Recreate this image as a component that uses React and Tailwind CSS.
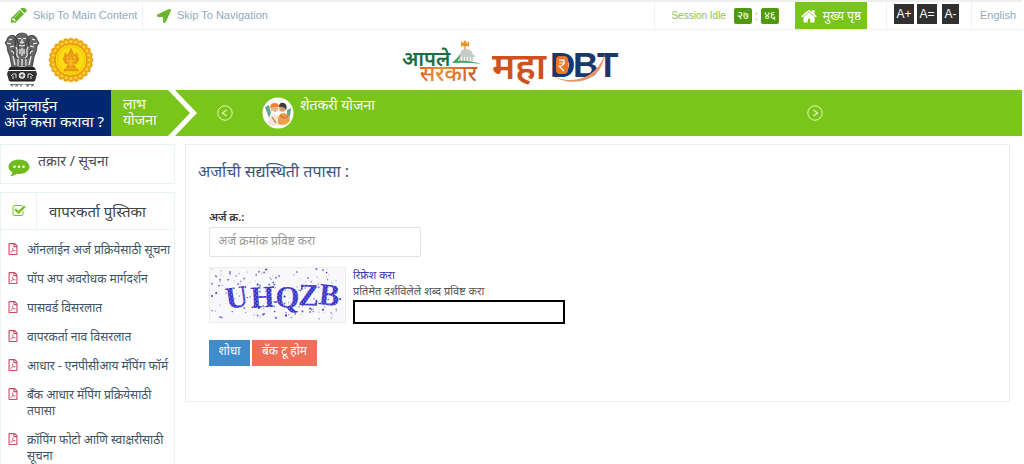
import React from "react";
import { FaLocationArrow, FaRegFilePdf } from "react-icons/fa";

const guides = [
  "ऑनलाईन अर्ज प्रक्रियेसाठी सूचना",
  "पॉप अप अवरोधक मार्गदर्शन",
  "पासवर्ड विसरलात",
  "वापरकर्ता नाव विसरलात",
  "आधार - एनपीसीआय मॅपिंग फॉर्म",
  "बँक आधार मॅपिंग प्रक्रियेसाठी तपासा",
  "क्रॉपिंग फोटो आणि स्वाक्षरीसाठी सूचना",
];

function Pencil() {
  return (
    <svg viewBox="128 256 1536 1536" className="size-4 text-[#69b62c]" fill="currentColor" aria-hidden="true">
      <path d="M491 1536l91-91-235-235-91 91v107h128v128h107zm523-928q0-22-22-22-10 0-17 7l-542 542q-7 7-7 17 0 22 22 22 10 0 17-7l542-542q7-7 7-17zm-54-192l416 416-832 832h-416v-416zm683 96q0 53-37 90l-166 166-416-416 166-165q36-38 90-38 53 0 91 38l235 234q37 39 37 91z" />
    </svg>
  );
}

function Home() {
  return (
    <svg viewBox="0 170 1664 1400" className="h-3.5 w-4" fill="currentColor" aria-hidden="true">
      <path d="M1408 992v480q0 26-19 45t-45 19H960v-384H704v384H320q-26 0-45-19t-19-45V992q0-1 .5-3t.5-3l575-474 575 474q1 2 1 6zm223-69l-62 74q-8 9-21 11h-3q-13 0-21-7L832 424l-692 577q-12 8-24 7-13-2-21-11l-62-74q-8-10-7-23.5t11-21.5l719-599q32-26 76-26t76 26l244 204V288q0-14 9-23t23-9h192q14 0 23 9t9 23v408l219 182q10 8 11 21.5t-7 23.5z" />
    </svg>
  );
}

function CheckBoxIcon() {
  return (
    <svg viewBox="0 0 1792 1792" className="size-3.5 text-[#7ac519]" fill="currentColor" aria-hidden="true">
      <path d="M1472 930v318q0 119-84.5 203.5t-203.5 84.5h-832q-119 0-203.5-84.5t-84.5-203.5v-832q0-119 84.5-203.5t203.5-84.5h832q63 0 117 25 15 7 18 23 3 17-9 29l-49 49q-10 10-23 10-3 0-9-2-23-6-45-6h-832q-66 0-113 47t-47 113v832q0 66 47 113t113 47h832q66 0 113-47t47-113v-254q0-13 9-22l64-64q10-10 23-10 6 0 12 3 20 8 20 29zm231-489l-814 814q-24 24-57 24t-57-24l-430-430q-24-24-24-57t24-57l110-110q24-24 57-24t57 24l263 263 647-647q24-24 57-24t57 24l110 110q24 24 24 57t-24 57z" />
    </svg>
  );
}

function Comment() {
  return (
    <svg viewBox="0 0 22 18" className="h-[18px] w-[22px] shrink-0" aria-hidden="true">
      <path d="M11 .5C5.200.500.500 3.700.500 7.700c0 2.300 1.500 4.300 3.900 5.600-.3 1.700-1.100 2.900-2.200 4 2.600-.3 4.700-1.200 6.200-2.600.8.200 1.700.2 2.600.2 5.800 0 10.500-3.200 10.500-7.200S16.800.5 11 .5z" fill="#6fbb1c" />
      <g fill="#fff">
        <circle cx="6.500" cy="7.800" r="1.300" />
        <circle cx="11" cy="7.800" r="1.300" />
        <circle cx="15.500" cy="7.800" r="1.300" />
      </g>
    </svg>
  );
}

function LionEmblem() {
  return (
    <svg viewBox="0 0 36 56" className="h-14 w-9" role="img" aria-label="भारत सरकार">
      <g fill="#666" stroke="#222" strokeWidth=".7">
        <path d="M13 3c2-2.500 8-2.500 10 0l3 5-1 9 1 17H10l1-17-1-9z" />
        <path d="M11 4C7 2 3 5 3 8L1 11l2 3c0 5 2 8 3 11l2 11h6l-1-15 2-8z" />
        <path d="M25 4c4-2 8 1 8 4l2 3-2 3c0 5-2 8-3 11l-2 11h-6l1-15-2-8z" />
      </g>
      <g fill="none" stroke="#f4f4f4" strokeWidth="1.200">
        <path d="M14 6.500h3M19 6.500h3M16 10l2 1 2-1M15 13q3 2 6 0M18 7v3" />
        <path d="M12 15q2 3 1 6t2 5M24 15q-2 3-1 6t-2 5M16 17v5M20 17v5M18 16v8" />
        <path d="M5 8l3-1M3 11l4 1M6 15l4-1M7 19q3 0 3 3M31 8l-3-1M33 11l-4 1M30 15l-4-1M29 19q-3 0-3 3" />
        <path d="M9 24l2 9M14 27v7M18 27v7M22 27v7M27 24l-2 9" />
      </g>
      <g fill="none" stroke="#222" strokeWidth=".8">
        <path d="M10 7q3 3 1 7M26 7q-3 3-1 7M9 17q3 4 2 9M27 17q-3 4-2 9" />
      </g>
      <path d="M6 35h24l2 3H4z" fill="#222" />
      <path d="M4 39h28l1 3-2 7H5l-2-7z" fill="#333" />
      <circle cx="18" cy="43.500" r="4" fill="#fff" stroke="#111" />
      <circle cx="18" cy="43.500" r="1" />
      <path d="M18 40v7M14.500 43.500h7M15.500 41l5 5M20.500 41l-5 5" stroke="#444" strokeWidth=".5" />
      <path d="M7 44l2-2h3v4M9 44v3M29 44l-2-2h-3v4M27 44v3" stroke="#ddd" fill="none" />
      <path d="M6 49h24" stroke="#111" />
      <path d="M6 52.500h13M21 52.500h9M7 54h2M11 54h3M16 54h2M22 54h3M27 54h2M8 52v2M13 52v2M24 52v2M29 52v2" stroke="#555" strokeWidth=".8" />
    </svg>
  );
}

function StateSeal() {
  const petals = Array.from({ length: 24 }, (_, i) => (i * Math.PI) / 12);
  return (
    <svg viewBox="-23 -23 46 46" className="size-[46px]" role="img" aria-label="महाराष्ट्र शासन">
      {petals.map((a) => (
        <circle key={a} cx={19.6 * Math.cos(a)} cy={19.6 * Math.sin(a)} r="2.700" fill="#e9a515" />
      ))}
      <circle r="20.500" fill="#f0aa13" />
      {petals.map((a) => (
        <circle key={a} cx={18.4 * Math.cos(a)} cy={18.4 * Math.sin(a)} r="1.300" fill="#ffd83a" />
      ))}
      <circle r="16" fill="#fbd90f" stroke="#dd8f10" strokeWidth="1" />
      <circle r="13.500" fill="#fddb12" stroke="#f1b90f" strokeWidth=".8" />
      <g fill="#ec9a18" stroke="#da8015" strokeWidth=".5">
        <path d="M0-12l1.500 4h-3zM-6-7l2.500 2-1 4h-3zM6-7l-2.500 2 1 4h3z" />
        <circle cy="-5" r="3" />
        <path d="M-8-1q4 2 6-1h4q2 3 6 1l-2 4-3 1 2 4h-10l2-4-3-1zM-7 9h14v2H-7z" />
      </g>
      <path d="M-4 1h8M-3 4h6M0-3v10" stroke="#ffd52b" strokeWidth=".8" />
    </svg>
  );
}

function AapleSarkar() {
  return (
    <svg viewBox="0 0 84 60" className="h-[60px] w-[84px]" fontFamily="Noto Sans, sans-serif" role="img" aria-label="आपले सरकार">
      <defs>
        <linearGradient id="saffron">
          <stop offset="0" stopColor="#e8622a" />
          <stop offset=".35" stopColor="#ee8b35" />
          <stop offset="1" stopColor="#c65a24" />
        </linearGradient>
      </defs>
      <text x="2" y="36" fontSize="20" fontWeight="600" fill="#17713f">आपले</text>
      <text x="20" y="51" fontSize="22" fontWeight="500" fill="url(#saffron)">सरकार</text>
      <path d="M61 17v-6l2 2 2-3 2 3 2-2v6l-2-1h-4z" fill="#e8962e" />
      <path d="M65 15v5" stroke="#ba6c26" strokeWidth="1" />
      <path d="M60 25q0-6 6-6t7 6z" fill="#c6cac7" />
      <path d="M58 26h17M60 27v4M63 27v4M66 27v4M69 27v4M72 27v4" stroke="#929b97" />
      <path d="M52 33q5-5 9-9l-3 7q10-1 23 3-13-2-29-1z" fill="#3fa55f" />
    </svg>
  );
}

function MahaDbt() {
  return (
    <svg viewBox="0 0 130 60" className="h-[60px] w-[130px]" role="img" aria-label="महाDBT">
      <text x="0" y="49" fontSize="37" fontWeight="600" fontFamily="Noto Sans, sans-serif" fill="#cf5120">महा</text>
      <g fontFamily="Liberation Sans, sans-serif" fontWeight="700" fontSize="35" fill="#19376d">
        <text x="58" y="47">D</text>
        <text x="81" y="47">B</text>
        <text x="105" y="47">T</text>
      </g>
      <rect x="64" y="26" width="12" height="18" rx="4" fill="#e8772e" />
      <path d="M67 30h6M67 33h6M67 30q6 0 5 3t-5 3l5 5" fill="none" stroke="#fff" strokeWidth="1.200" />
      <path d="M59 45q19 10 38 0 12-8 16-22-2 18-15 25-20 9-39-3z" fill="#e69768" />
    </svg>
  );
}

function Farmers() {
  return (
    <svg viewBox="0 0 32 32" className="size-8" aria-hidden="true">
      <circle cx="16" cy="16" r="15.500" fill="#fff" />
      <path d="M3 10l4-2 2 8-2 5zM25 13l4-2-1 8-3 3z" fill="#62a38d" />
      <path d="M6 27q0-11 6-10 5-1 6 10-6 4-12 0z" fill="#f1e7da" />
      <path d="M16 27q-1-12 6-11 6 1 6 8-5 6-12 3z" fill="#eda04b" />
      <circle cx="12.500" cy="12" r="3.700" fill="#e8b58a" />
      <path d="M8 11q0-5 5-5 4 0 4 4-4-1-9 1z" fill="#ee852d" />
      <path d="M10 14q3 4 6 0" stroke="#fff" strokeWidth="1.500" fill="none" />
      <circle cx="20.500" cy="11.500" r="3.300" fill="#d89a70" />
      <path d="M17 10q0-5 5-4 4 2 2 7-2-4-7-3z" fill="#3e3a42" />
      <path d="M18 18q4 5 8 1M10 20l4 6" stroke="#d5723b" strokeWidth="1.300" fill="none" />
    </svg>
  );
}

function Captcha() {
  const dots = Array.from({ length: 170 }, (_, i) => ({
    x: 3 + ((i * 7919 + i * i * 31) % 1310) / 10,
    y: 2 + ((i * 3571 + i * i * 17) % 510) / 10,
    r: 0.4 + (i % 4) * 0.2,
  }));
  const letters = [
    ["U", 18, 42, -8],
    ["H", 42, 41, -3],
    ["Q", 66, 40, 2],
    ["Z", 89, 38, 2],
    ["B", 109, 37, 6],
  ];
  return (
    <svg viewBox="0 0 137 56" className="h-14 w-[137px] shrink-0" role="img" aria-label="UHQZB">
      <defs>
        <pattern id="speckle" width="4" height="4" patternUnits="userSpaceOnUse">
          <rect width="4" height="4" fill="#3b38c8" />
          <path d="M0 0h1v1H0zM2 2h1v1H2z" fill="#aaa9ee" />
        </pattern>
      </defs>
      <rect x=".5" y=".5" width="136" height="55" fill="#f9f9fb" stroke="#ececec" />
      {dots.map((d, i) => (
        <circle key={i} cx={d.x} cy={d.y} r={d.r} fill={i % 3 ? "#7f7dd4" : "#3a37bc"} />
      ))}
      <g fontFamily="Liberation Serif, serif" fontWeight="700" fontSize="31" fill="url(#speckle)">
        {letters.map(([c, x, y, a]) => (
          <text key={c} x={x} y={y} transform={`rotate(${a} ${x} ${y})`}>{c}</text>
        ))}
      </g>
    </svg>
  );
}

function Arrow({ d, label }) {
  return (
    <button type="button" aria-label={label} className="shrink-0">
      <svg viewBox="0 0 16 16" className="size-4" fill="none" stroke="#e4f7c8" aria-hidden="true">
        <circle cx="8" cy="8" r="7.200" />
        <path d={d} strokeWidth="1.300" />
      </svg>
    </button>
  );
}

function TopBar() {
  return (
    <div className="flex h-[30px] items-stretch border-t-2 border-b border-t-[#edf0f1] border-b-[#edf2f5] font-['Liberation_Sans',sans-serif] text-xs text-[#91a9bd]">
      <a href="#main" className="flex w-[143px] items-center gap-1.5 border-r border-[#edf2f5] pl-[11px] whitespace-nowrap text-[11px]">
        <Pencil />
        Skip To Main Content
      </a>
      <a href="#nav" className="flex items-center gap-1.5 pl-3.5 text-[11px]">
        <FaLocationArrow className="size-3.5 text-[#69b62c]" />
        Skip To Navigation
      </a>
      <div className="ml-auto flex items-center border-l border-[#edf2f5] pr-4 pl-4 text-[#8cc152]">
        <span className="mr-2 text-[10px]">Session Idle</span>
        <span className="flex h-4 w-[18px] items-center justify-center rounded-xs bg-[#4f9a0a] font-['Noto_Sans',sans-serif] text-[11px] text-white">२७</span>
        <span className="w-[9px] text-center">:</span>
        <span className="flex h-4 w-[18px] items-center justify-center rounded-xs bg-[#4f9a0a] font-['Noto_Sans',sans-serif] text-[11px] text-white">४६</span>
      </div>
      <a href="#home" className="flex w-[72px] items-center justify-center gap-1.5 bg-[#7ac519] font-['Noto_Sans',sans-serif] text-xs whitespace-nowrap text-white">
        <Home />
        मुख्य पृष्ठ
      </a>
      <div className="ml-[19px] flex items-start gap-[3px] border-l border-[#edf2f5] pt-0.5 pr-3 pl-[7px] text-white">
        <button type="button" className="h-5 w-5 bg-[#303030] text-xs">A+</button>
        <button type="button" className="h-5 w-5 bg-[#303030] text-xs">A=</button>
        <button type="button" className="ml-0.5 h-5 w-[17px] bg-[#303030] text-xs">A-</button>
      </div>
      <a href="#english" className="flex items-center border-l border-[#edf2f5] pr-1.5 pl-2 text-[11px]">English</a>
    </div>
  );
}

function Band() {
  return (
    <nav id="nav" className="flex h-[46px] bg-[#7ac519] text-sm leading-4 text-white">
      <a href="#apply" className="w-[111px] shrink-0 bg-[#00276f] pt-[7px] pl-1 text-[15px] leading-4 whitespace-nowrap">
        ऑनलाईन
        <br />
        अर्ज कसा करावा ?
      </a>
      <a href="#schemes" className="w-[57px] shrink-0 pt-1.5 pl-3">
        लाभ
        <br />
        योजना
      </a>
      <svg viewBox="0 0 29 46" className="h-[46px] w-[29px] shrink-0" aria-hidden="true">
        <path d="M0 0h7l22 23L7 46H0l22-23z" fill="#fff" />
      </svg>
      <div className="flex flex-1 items-center pl-5">
        <Arrow label="मागील" d="M9.500 5L5.500 8l4 3" />
        <a href="#farmer" className="ml-[29px] flex items-start gap-1.5">
          <Farmers />
          <span>शेतकरी योजना</span>
        </a>
      </div>
      <div className="flex w-[215px] items-center">
        <Arrow label="पुढील" d="M6.500 5l4 3-4 3" />
      </div>
    </nav>
  );
}

function Sidebar() {
  return (
    <aside className="w-[175px] shrink-0">
      <a href="#grievance" className="flex h-10 items-start gap-2 border border-[#e8f3f6] pt-2 pl-[7px] text-[#4c4c4c]">
        <span className="pt-1.5"><Comment /></span>
        <span className="text-sm leading-4">तक्रार / सूचना</span>
      </a>
      <section className="mt-2 border border-[#e8f3f6]">
        <h2 className="flex h-[37px] items-stretch border-b border-[#e8f3f6] text-[15px] text-[#444]">
          <span className="flex w-9 items-center justify-center border-r border-[#e8f3f6]"><CheckBoxIcon /></span>
          <span className="flex items-center pl-3">वापरकर्ता पुस्तिका</span>
        </h2>
        <ul className="flex flex-col gap-[13px] pt-3 text-xs leading-4 text-[#3d5568]">
          {guides.map((g) => (
            <li key={g}>
              <a href="#guide" className="flex gap-2 pl-1.5">
                <FaRegFilePdf className="mt-px size-3 shrink-0 text-[#c94c67]" />
                <span>{g}</span>
              </a>
            </li>
          ))}
        </ul>
      </section>
    </aside>
  );
}

export default function App() {
  return (
    <div className="border-b border-[#d5e0e5] bg-white pr-0.5 font-['Noto_Sans',sans-serif]">
      <TopBar />
      <header className="grid h-[60px] grid-cols-[1fr_auto_1fr] items-center">
        <div className="flex items-center gap-2 pl-1">
          <LionEmblem />
          <StateSeal />
        </div>
        <div className="flex items-center gap-2">
          <AapleSarkar />
          <MahaDbt />
        </div>
      </header>
      <Band />
      <div className="flex gap-2.5 pt-2 pr-3">
        <Sidebar />
        <main id="main" className="h-[258px] flex-1 border border-[#e8eef2] pt-3.5 pl-3">
          <h1 className="text-base leading-6 text-[#3a5684]">अर्जाची सद्यस्थिती तपासा :</h1>
          <form className="pt-6 pl-[11px]" onSubmit={(e) => e.preventDefault()}>
            <label htmlFor="application" className="block text-[11px] leading-5 font-semibold text-[#333]">अर्ज क्र.:</label>
            <input id="application" placeholder="अर्ज क्रमांक प्रविष्ट करा" className="block h-[30px] w-[212px] rounded-xs border border-[#e3e3e3] px-2 pb-1 text-xs placeholder:text-[#999]" />
            <div className="flex gap-[7px] pt-2.5">
              <Captcha />
              <div className="text-[11px] leading-4">
                <a href="#refresh" className="block text-[#3530bb]">रिफ्रेश करा</a>
                <label htmlFor="captcha" className="block text-[#555]">प्रतिमेत दर्शविलेले शब्द प्रविष्ट करा</label>
                <input id="captcha" className="mt-px block h-6 w-[212px] border-2 border-black" />
              </div>
            </div>
            <div className="flex gap-0.5 pt-4 text-xs text-white">
              <button type="submit" className="h-[26px] w-[41px] bg-[#428bca] pb-1">शोधा</button>
              <button type="button" className="h-[26px] w-[65px] bg-[#ec6f5a] pb-1">बॅक टू होम</button>
            </div>
          </form>
        </main>
      </div>
    </div>
  );
}
